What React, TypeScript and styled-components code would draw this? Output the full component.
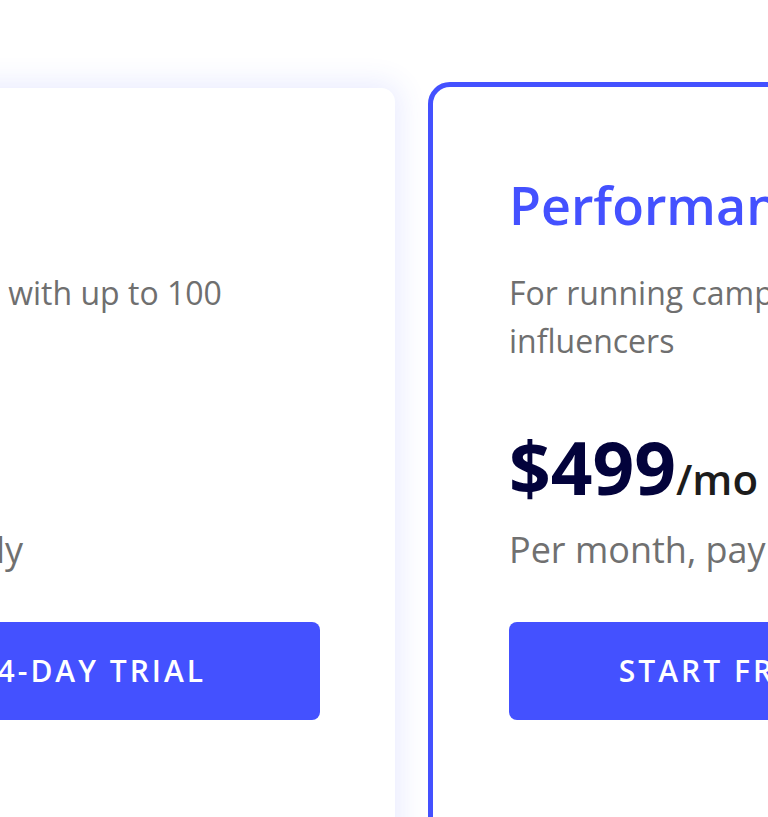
import styled, {createGlobalStyle} from 'styled-components'

const GlobalStyle = createGlobalStyle`
  * {
    box-sizing: border-box;
  }
  html, body {
    margin: 0;
    height: 817px;
    overflow: hidden;
    background: #ffffff;
    font-family: "Open Sans", "Liberation Sans", sans-serif;
  }
`

interface IPlan {
    featured?: boolean;
    title: string;
    description: string;
    price: string;
    note: string;
}

const plans: IPlan[] = [
    {
        title: 'Growth',
        description: 'For running campaigns with up to 100 influencers',
        price: '$199',
        note: 'Per month, pay yearly',
    },
    {
        featured: true,
        title: 'Performance',
        description: 'For running campaigns with up to 500 influencers',
        price: '$499',
        note: 'Per month, pay yearly',
    },
]

const PlanCard = ({featured, title, description, price, note}: IPlan) => {
    return (
        <Card featured={featured}>
            <Title>{title}</Title>
            <Description>{description}</Description>
            <Price>
                {price}
                <Period>/mo</Period>
            </Price>
            <Note>{note}</Note>
            <TrialButton>Start free 14-day trial</TrialButton>
        </Card>
    )
}

const App = () => {
    return (
        <>
            <GlobalStyle/>
            <Pricing>
                {plans.map((plan) => (
                    <PlanCard key={plan.title} {...plan}/>
                ))}
            </Pricing>
        </>
    )
}
export default App

// ==========================================

const Pricing = styled.section`
  display: flex;
  align-items: flex-start;
  column-gap: 33px;
  margin-left: -418px;
`

const Card = styled.div<{ featured?: boolean }>`
  flex: 0 0 auto;
  display: flex;
  flex-direction: column;
  min-height: 900px;
  background: #ffffff;

  width: ${(props) => (props.featured ? '817px' : '813px')};
  margin-top: ${(props) => (props.featured ? '82px' : '88px')};
  padding: ${(props) => (props.featured ? '83px 76px 0' : '82px 75px 0')};
  border-radius: ${(props) => (props.featured ? '22px' : '14px')};
  border: ${(props) => (props.featured ? '5px solid #4451ff' : 'none')};
  box-shadow: ${(props) =>
          props.featured ? 'none' : '0 0 28px 6px rgba(68, 81, 255, 0.11)'};
`

const Title = styled.h2`
  margin: 0;
  font-size: 52px;
  font-weight: 600;
  line-height: 70px;
  color: #4451ff;
`

const Description = styled.p`
  margin: 29px 0 0;
  font-size: 32px;
  font-weight: 400;
  line-height: 1.5;
  color: #6f6f6f;
`

const Price = styled.div`
  margin-top: 58px;
  font-size: 73px;
  font-weight: 700;
  line-height: 1.2;
  color: #03033b;
`

const Period = styled.span`
  font-size: 42px;
  font-weight: 600;
  color: #1c1c1c;
`

const Note = styled.p`
  margin: 12px 0 0;
  font-size: 36px;
  line-height: 1.5;
  color: #707070;
`

const TrialButton = styled.button`
  margin-top: 45px;
  width: 100%;
  height: 98px;
  border: none;
  border-radius: 8px;
  background: #4451ff;
  color: #ffffff;
  font-family: "Open Sans", "Liberation Sans", sans-serif;
  font-size: 30px;
  font-weight: 600;
  letter-spacing: 3px;
  text-transform: uppercase;
  cursor: pointer;
`
